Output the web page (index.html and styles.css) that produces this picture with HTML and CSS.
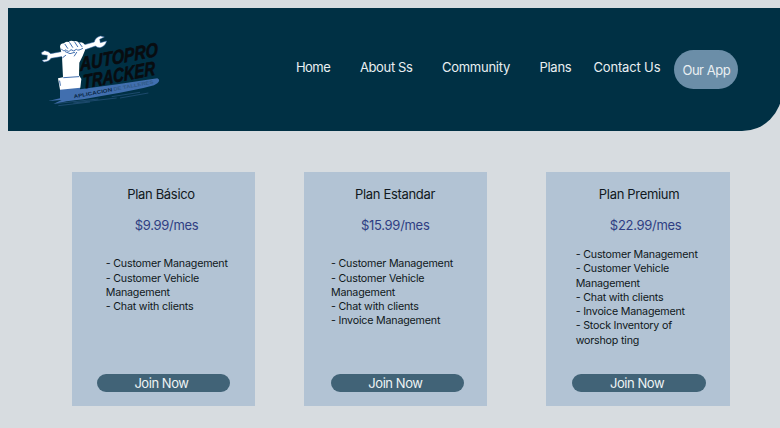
FILE: index.html
```html
<!DOCTYPE html>
<html lang="es">
<head>
<meta charset="utf-8">
<title>AutoPro Tracker</title>
<link rel="stylesheet" href="styles.css">
</head>
<body>
<header class="header">
  <svg class="logo" viewBox="0 0 435 270" role="img" aria-label="AutoPro Tracker">
    <path fill="#416faf" d="M90 188L150 185V193L262 178L382 160Q393 165 382 175L372 181L340 189L270 203L214 213L160 223L110 229L70 237L95 225L55 228L90 220Z"/>
    <path fill="none" stroke="#2b5680" stroke-width="2" d="M75 236L205 222M85 242L180 231M245 215L330 202M270 219L355 204M130 234L260 219"/>
    <path fill="#fff" stroke="#416faf" stroke-width="1.5" d="M34 83L44 77Q56 78 62 86L94 80L160 60L193 51Q195 38 211 33L223 36L209 43L211 53L230 48Q225 65 210 68Q202 68 196 63L160 76L105 93L63 100Q58 110 42 111L36 106L51 103L52 91L36 89Z"/>
    <path fill="#fff" d="M96 96L93 77L90 65Q91 55 102 55Q106 48 116 51Q122 45 132 49Q140 45 147 53Q158 48 165 60V76L158 93L148 113L147 151L154 162L151 188L90 194L84 160L99 157Z"/>
    <path fill="none" stroke="#416faf" stroke-width="3" stroke-linecap="round" d="M105 58L113 70M119 53L128 67M134 51L143 65M148 54L156 65M94 72Q102 82 108 74Q115 84 123 74Q131 82 139 73Q145 79 158 70M106 80L120 86L134 82M140 82L133 93M98 98L107 91M101 158L146 155M89 168L91 181"/>
    <g class="wordmark">
      <text transform="translate(151 138) rotate(-11) skewX(-8)" textLength="238" lengthAdjust="spacingAndGlyphs">AUTOPRO</text>
      <text transform="translate(160 191) rotate(-11) skewX(-8)" textLength="220" lengthAdjust="spacingAndGlyphs">TRACKER</text>
    </g>
    <g class="tagline" transform="rotate(-10.5 132 220)">
      <text x="132" y="220" textLength="117" lengthAdjust="spacingAndGlyphs">APLICACION</text>
      <text class="faded" x="253" y="220" textLength="122" lengthAdjust="spacingAndGlyphs">DE TALLERES</text>
    </g>
  </svg>
  <nav class="nav">
    <a class="home">Home</a>
    <a class="about">About Ss</a>
    <a class="community">Community</a>
    <a class="plans-link">Plans</a>
    <a class="contact">Contact Us</a>
    <a class="app">Our App</a>
  </nav>
</header>
<main class="plans">
  <section class="card basic">
    <h2>Plan Básico</h2>
    <p class="price">$9.99/mes</p>
    <div class="features">- Customer Management<br>- Customer Vehicle<br>Management<br>- Chat with clients</div>
    <button>Join Now</button>
  </section>
  <section class="card standard">
    <h2>Plan Estandar</h2>
    <p class="price">$15.99/mes</p>
    <div class="features">- Customer Management<br>- Customer Vehicle<br>Management<br>- Chat with clients<br>- Invoice Management</div>
    <button>Join Now</button>
  </section>
  <section class="card premium">
    <h2>Plan Premium</h2>
    <p class="price">$22.99/mes</p>
    <div class="features">- Customer Management<br>- Customer Vehicle<br>Management<br>- Chat with clients<br>- Invoice Management<br>- Stock Inventory of<br>worshop ting</div>
    <button>Join Now</button>
  </section>
</main>
</body>
</html>
```
FILE: styles.css
```css
* { box-sizing: border-box; }
body {
  margin: 0;
  height: 428px;
  overflow: hidden;
  background: #d7dce0;
  font-family: Inter, "Liberation Sans", sans-serif;
  color: #101820;
}
.header {
  display: flex;
  margin: 8px 0 0 8px;
  width: 774px;
  height: 123.4px;
  background: #003044;
  border-bottom-right-radius: 40px;
}
.logo { width: 145px; height: 90px; margin: 17px 0 0 22px; flex: none; overflow: visible; }
.wordmark {
  font: italic 900 58px "Liberation Sans", sans-serif;
  fill: #080c10;
  stroke: #080c10;
  stroke-width: 2;
  stroke-linejoin: round;
}
.tagline { font: bold 15px "Liberation Sans", sans-serif; fill: #0b2947; }
.faded { fill: #315b88; }
.nav {
  display: grid;
  grid-template-columns: 64px 82px 97.5px 54px 81px 64px;
  margin-left: 120.9px;
  padding-top: 42px;
  align-items: start;
  font-size: 13px;
  line-height: 18px;
  white-space: nowrap;
  color: #e9eff2;
}
.nav a { padding-top: 8px; letter-spacing: -0.25px; }
.nav .home { letter-spacing: -0.5px; }
.nav .about { letter-spacing: -0.35px; }
.nav .contact { letter-spacing: -0.15px; }
.nav .app {
  height: 39px;
  padding: 11px 0 0 8px;
  border-radius: 20px;
  background: #6b8ea8;
  letter-spacing: -0.45px;
}
.plans {
  display: flex;
  padding: 41px 0 0 71.7px;
}
.card {
  display: flex;
  flex-direction: column;
  width: 183.2px;
  height: 233.6px;
  padding-top: 13px;
  background: #b2c3d4;
}
.standard { margin-left: 49.1px; }
.premium { margin-left: 59.2px; }
h2, .price {
  margin: 0;
  font-size: 13px;
  line-height: 18px;
  font-weight: 400;
  letter-spacing: -0.3px;
}
h2 { padding-left: 55.5px; letter-spacing: -0.32px; }
.price { margin-top: 13px; padding-left: 63px; color: #2f3e83; }
.features {
  margin-top: 23px;
  padding-left: 34px;
  font-size: 10.7px;
  line-height: 14.25px;
  letter-spacing: -0.2px;
  white-space: nowrap;
}
button {
  width: 133.5px;
  height: 17.5px;
  margin: auto 0 14.2px 25px;
  padding: 1px 4px 0 0;
  border: 0;
  border-radius: 9px;
  background: #416377;
  color: #eef3f5;
  font: 13px/17px Inter, sans-serif;
  letter-spacing: -0.45px;
}
.standard h2 { padding-left: 51px; }
.standard .price { padding-left: 57px; }
.standard .features { padding-left: 27px; }
.standard button { margin-left: 26.7px; }
.premium h2 { padding-left: 52.5px; }
.premium .price { padding-left: 63.5px; }
.premium .features { margin-top: 13.7px; padding-left: 29.3px; }
.premium button { margin-left: 26px; }
```
